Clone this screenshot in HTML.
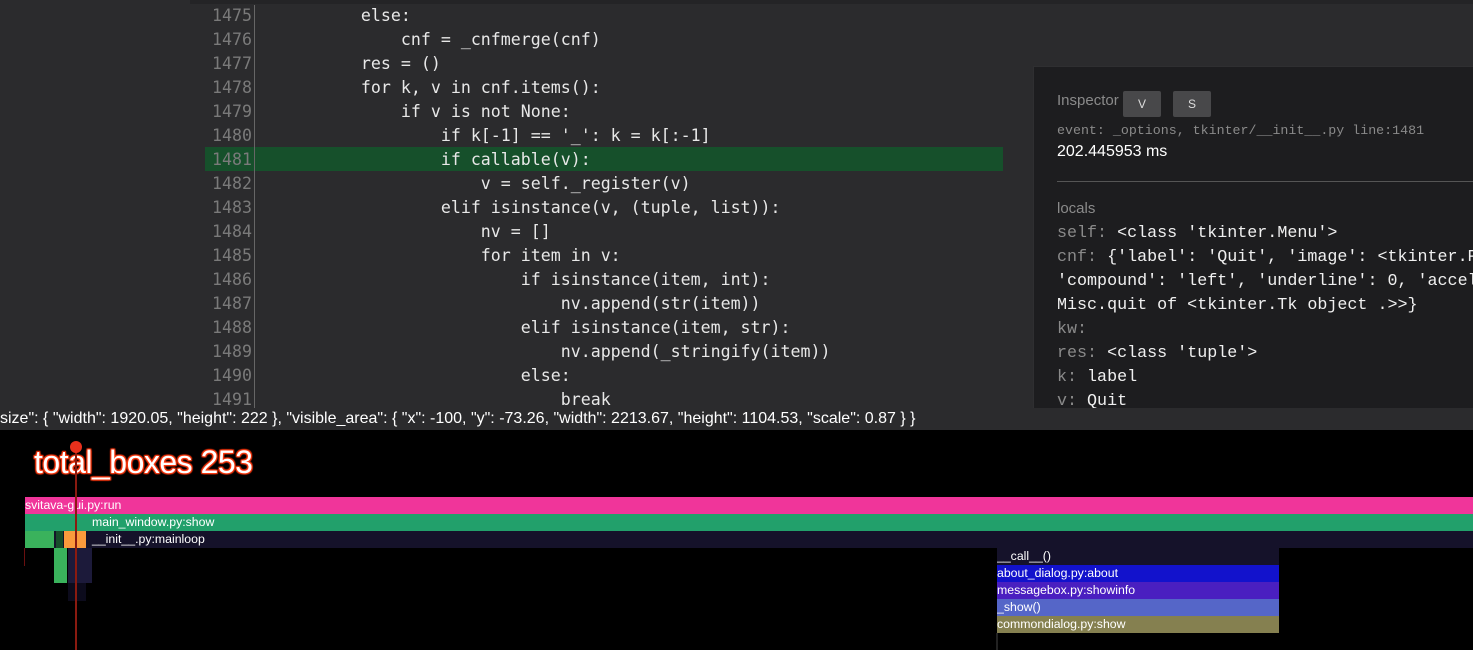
<!DOCTYPE html>
<html><head><meta charset="utf-8"><style>
*{margin:0;padding:0;box-sizing:border-box}
html,body{width:1473px;height:650px;overflow:hidden}
body{background:#000;position:relative;font-family:"Liberation Sans",sans-serif}
#top{position:absolute;left:0;top:0;width:1473px;height:408px;background:#2b2b2d}
.ln{position:absolute;left:190px;width:62px;text-align:right;color:#7a7a7a;font:16.6px/24px "DejaVu Sans Mono",monospace}
.cd{position:absolute;left:281px;color:#e8e8e8;font:16.6px/24px "DejaVu Sans Mono",monospace;white-space:pre}
#gut{position:absolute;left:254px;top:5px;width:1px;height:403px;background:#666}
#hl{position:absolute;left:205px;top:147px;width:798px;height:24px;background:#16502b}
#insp{position:absolute;left:1033px;top:66px;width:440px;height:342px;background:#1d1d1f;border-left:1px solid #2f2f31;border-top:1px solid #2f2f31}
.t{position:absolute;white-space:pre}
.m{font-family:"Liberation Mono",monospace;font-size:16.7px;color:#f0f0f0}
.k{color:#8a8a8a}
.btn{position:absolute;top:91px;width:38px;height:26px;background:#48484a;color:#ddd;font-size:12px;line-height:26px;text-align:center;border-radius:2px}
#status{position:absolute;left:0;top:408px;width:1473px;height:22px;background:#2b2b2d;color:#fff;font-size:16px;line-height:22px;white-space:pre;overflow:hidden}
.b{position:absolute;height:17px;color:#fff;font-size:12.3px;line-height:17px;white-space:pre;overflow:hidden}
#clip{position:absolute;left:0;top:0;width:1473px;height:650px;overflow:hidden}
</style></head><body><div id="clip">
<div id="top"></div>
<div style="position:absolute;left:190px;top:0;width:1283px;height:4px;background:#242426"></div>
<div id="hl"></div>
<div id="gut"></div>
<div class="ln" style="top:4px">1475<br>1476<br>1477<br>1478<br>1479<br>1480<br>1481<br>1482<br>1483<br>1484<br>1485<br>1486<br>1487<br>1488<br>1489<br>1490<br>1491</div>
<div class="cd" style="top:4px">        else:
            cnf = _cnfmerge(cnf)
        res = ()
        for k, v in cnf.items():
            if v is not None:
                if k[-1] == '_': k = k[:-1]
                if callable(v):
                    v = self._register(v)
                elif isinstance(v, (tuple, list)):
                    nv = []
                    for item in v:
                        if isinstance(item, int):
                            nv.append(str(item))
                        elif isinstance(item, str):
                            nv.append(_stringify(item))
                        else:
                            break</div>
<div id="insp"></div>
<div class="t" style="left:1057px;top:92px;font-size:15px;color:#8a8a8a">Inspector</div>
<div class="btn" style="left:1123px">V</div>
<div class="btn" style="left:1173px">S</div>
<div class="t" style="left:1057px;top:123px;font:13.3px 'Liberation Mono',monospace;color:#8a8a8a">event: _options, tkinter/__init__.py line:1481</div>
<div class="t" style="left:1057px;top:143px;font-size:16px;color:#fff">202.445953 ms</div>
<div style="position:absolute;left:1057px;top:181px;width:416px;height:1px;background:#555"></div>
<div class="t" style="left:1057px;top:200px;font-size:15px;color:#8a8a8a">locals</div>
<div class="t m" style="left:1057px;top:222px;line-height:24px;width:416px;overflow:hidden"><span class="k">self:</span> &lt;class 'tkinter.Menu'&gt;
<span class="k">cnf:</span> {'label': 'Quit', 'image': &lt;tkinter.PhotoImage
'compound': 'left', 'underline': 0, 'accelerator'
Misc.quit of &lt;tkinter.Tk object .&gt;&gt;}
<span class="k">kw:</span>
<span class="k">res:</span> &lt;class 'tuple'&gt;
<span class="k">k:</span> label
<span class="k">v:</span> Quit</div>
<div id="status">size": { "width": 1920.05, "height": 222 }, "visible_area": { "x": -100, "y": -73.26, "width": 2213.67, "height": 1104.53, "scale": 0.87 } }</div>
<div class="t" style="left:34px;top:444px;font-size:32px;color:#fff;text-shadow:0 0 2px #ff3a10,0 0 2px #ff3a10,1px 1px 1px #ff3a10,-1px -1px 1px #ff3a10,1px -1px 1px #ff3a10,-1px 1px 1px #ff3a10;letter-spacing:-0.5px">total_boxes 253</div>
<div class="b" style="left:25px;top:497px;width:1448px;background:#f0359a">svitava-gui.py:run</div>
<div class="b" style="left:25px;top:514px;width:1448px;background:#22a06b;padding-left:67px">main_window.py:show</div>
<div class="b" style="left:25px;top:531px;width:1448px;background:#15122a;padding-left:67px">__init__.py:mainloop</div>
<div style="position:absolute;left:25px;top:531px;width:29px;height:17px;background:#3ab25c"></div>
<div style="position:absolute;left:56px;top:531px;width:7px;height:17px;background:#164d2a"></div>
<div style="position:absolute;left:64px;top:531px;width:22px;height:17px;background:#fb9a3c"></div>
<div style="position:absolute;left:54px;top:548px;width:13px;height:35px;background:#3ab25c"></div>
<div style="position:absolute;left:68px;top:548px;width:24px;height:35px;background:#1c1a3a"></div>
<div style="position:absolute;left:68px;top:583px;width:18px;height:18px;background:#0c0b1c"></div>
<div style="position:absolute;left:24px;top:548px;width:1px;height:18px;background:#6a1010"></div>
<div class="b" style="left:997px;top:548px;width:282px;background:#15122a">__call__()</div>
<div class="b" style="left:997px;top:565px;width:282px;background:#1212cc">about_dialog.py:about</div>
<div class="b" style="left:997px;top:582px;width:282px;background:#4a1fc0">messagebox.py:showinfo</div>
<div class="b" style="left:997px;top:599px;width:282px;background:#5566c8">_show()</div>
<div class="b" style="left:997px;top:616px;width:282px;background:#858050">commondialog.py:show</div>
<div style="position:absolute;left:996px;top:633px;width:2px;height:17px;background:#222"></div>
<div style="position:absolute;left:75px;top:448px;width:2px;height:202px;background:#8a1a10"></div>
<div style="position:absolute;left:70px;top:441px;width:12px;height:12px;border-radius:50%;background:#e8301c"></div>
</div></body></html>
